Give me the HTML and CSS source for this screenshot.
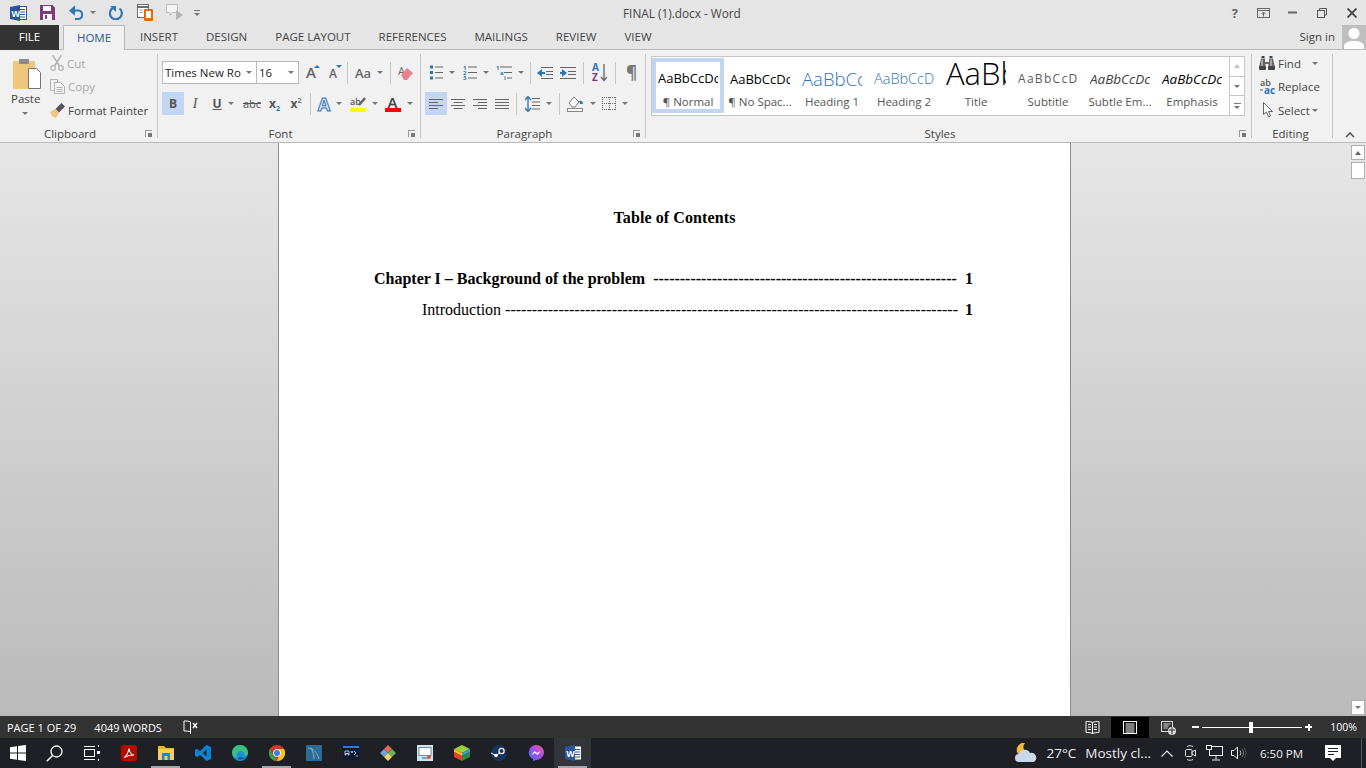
FILE: index.html
```html
<!DOCTYPE html>
<html lang="en">
<head>
  <meta charset="UTF-8" />
  <title>FINAL (1).docx - Word</title>
  <link rel="stylesheet" href="styles.css">
</head>
<body>
  <header class="titlebar">
    <div class="qat">
      <span class="qat-item q-word">
        <svg width="17" height="16" viewBox="0 0 17 16"><rect x="6" y="1.500" width="10.500" height="13" fill="#fff" stroke="#2b579a"/><path d="M10 4.500h5M10 7h5M10 9.500h5M10 12h5" stroke="#2b579a"/><path d="M0 2l10-2v16L0 14z" fill="#2b579a"/><text x="1.500" y="11.500" class="svg-w">W</text></svg>
      </span>
      <span class="qat-item q-save">
        <svg width="15" height="15" viewBox="0 0 15 15"><path d="M0 0h12.500L15 2.500V15H0z" fill="#80397b"/><rect x="3" y="1" width="8" height="5" fill="#fff"/><rect x="3" y="9" width="9" height="6" fill="#fff"/><rect x="5" y="10" width="2" height="4" fill="#80397b"/></svg>
      </span>
      <span class="qat-item q-undo">
        <svg width="16" height="15" viewBox="0 0 16 15"><path d="M3 5.500h6.500a4.300 4.300 0 0 1 0 8.500H6" fill="none" stroke="#2e75b6" stroke-width="2"/><path d="M6 0v10.500L0 5.500z" fill="#2e75b6" transform="translate(0 .2)"/></svg>
        <i class="caret"></i>
      </span>
      <span class="qat-item q-redo">
        <svg width="14" height="15" viewBox="0 0 14 15"><path d="M10.500 3.500A6 6 0 1 1 4 3" fill="none" stroke="#2e75b6" stroke-width="2.200"/><path d="M1 1h6v6z" fill="#2e75b6"/></svg>
      </span>
      <span class="qat-item q-touch">
        <svg width="17" height="17" viewBox="0 0 17 17"><rect x=".5" y=".5" width="11" height="13" fill="#fff" stroke="#6d6d6d"/><path d="M.5 3h11" stroke="#6d6d6d" stroke-width="2"/><path d="M2.500 6h3M2.500 8.500h3" stroke="#999"/><rect x="7" y="5" width="9" height="12" rx="1" fill="#e36c0a"/><rect x="9" y="7" width="5" height="7" fill="#fff"/></svg>
      </span>
      <span class="qat-item q-comment">
        <svg width="17" height="17" viewBox="0 0 17 17"><path d="M.5.500h11v8H6l-2 3v-3H.5z" fill="#f4f4f4" stroke="#bcbcbc"/><path d="M10 6l7 5-7 5z" fill="#b5b5b5"/></svg>
      </span>
      <span class="qat-item q-custom"><i class="qat-dash"></i><i class="caret small"></i></span>
    </div>
    <div class="doc-title">FINAL (1).docx - Word</div>
    <div class="win-btns">
      <span class="win-help">?</span>
      <svg class="win-opt" width="13" height="10" viewBox="0 0 13 10"><rect x=".5" y=".5" width="12" height="9" fill="none" stroke="#666"/><path d="M.5 2.500h12" stroke="#666"/><path d="M6.500 8.500V4M4.500 6l2-2 2 2" fill="none" stroke="#666"/></svg>
      <svg class="win-min" width="10" height="3" viewBox="0 0 10 3"><rect width="9" height="2" y=".5" fill="#666"/></svg>
      <svg class="win-max" width="10" height="10" viewBox="0 0 10 10"><path d="M2.500 2.500V.5h7v6.500H7.500" fill="none" stroke="#555"/><rect x=".5" y="2.500" width="7" height="7" fill="none" stroke="#555"/></svg>
      <svg class="win-close" width="10" height="10" viewBox="0 0 10 10"><path d="M.5.500l9 9M9.500.500l-9 9" stroke="#444" stroke-width="1.800"/></svg>
    </div>
  </header>

  <nav class="tabs">
    <span class="tab file">FILE</span>
    <span class="tab home">HOME</span>
    <span class="tab">INSERT</span>
    <span class="tab">DESIGN</span>
    <span class="tab">PAGE LAYOUT</span>
    <span class="tab">REFERENCES</span>
    <span class="tab">MAILINGS</span>
    <span class="tab">REVIEW</span>
    <span class="tab">VIEW</span>
    <span class="sign-in">Sign in</span>
    <svg class="avatar" width="24" height="24" viewBox="0 0 24 24"><rect width="24" height="24" fill="#bfbfbf"/><circle cx="12" cy="8.500" r="5.500" fill="#fff"/><path d="M2 24v-3c0-3 4-5 10-5s10 2 10 5v3z" fill="#fff"/></svg>
  </nav>

  <section class="ribbon">
    <div class="group clipboard">
      <div class="group-body clip-body">
        <div class="paste">
          <svg width="28" height="31" viewBox="0 0 28 31"><rect y="3" width="22" height="28" rx="1" fill="#ecc77d"/><rect x="6" y="1" width="10" height="5" rx="1" fill="#8a8a8a"/><path d="M15.500 10.500h8l4 4v16h-12z" fill="#fff" stroke="#777"/></svg>
          <span class="paste-label">Paste</span>
          <i class="caret"></i>
        </div>
        <div class="clip-actions">
          <div class="clip-row off">
            <svg width="14" height="16" viewBox="0 0 14 16"><path d="M2.500 0l7 11M11.500 0l-7 11" stroke="#b3b3b3" stroke-width="1.500"/><circle cx="3" cy="13" r="2.300" fill="none" stroke="#b3b3b3" stroke-width="1.300"/><circle cx="11" cy="13" r="2.300" fill="none" stroke="#b3b3b3" stroke-width="1.300"/></svg>
            <span>Cut</span>
          </div>
          <div class="clip-row off">
            <svg width="15" height="15" viewBox="0 0 15 15"><path d="M.5.500h7v3M4 11.500H.5V.500" fill="none" stroke="#b3b3b3"/><path d="M4.500 3.500h6l4 4v7h-10z" fill="#f5f5f5" stroke="#b3b3b3"/><path d="M6.500 8.500h6M6.500 10.500h6M6.500 12.500h6" stroke="#b3b3b3"/></svg>
            <span>Copy</span>
          </div>
          <div class="clip-row">
            <svg width="15" height="15" viewBox="0 0 15 15"><path d="M0 9l5-3 4 4-3 5c-2 0-5-3-6-6z" fill="#ecc77d"/><path d="M5.500 6l6-6 3.500 3.500-6 6z" fill="#555"/></svg>
            <span>Format Painter</span>
          </div>
        </div>
      </div>
      <div class="group-label">Clipboard<i class="launcher"></i></div>
    </div>

    <div class="group font">
      <div class="group-body stack">
        <div class="row">
          <span class="font-box">Times New Ro<i class="caret"></i></span>
          <span class="size-box">16<i class="caret"></i></span>
          <span class="t w22"><span class="big-a">A</span><i class="up-mark"></i></span>
          <span class="t w22"><span class="small-a">A</span><i class="down-mark"></i></span>
          <i class="sep"></i>
          <span class="t w36"><span class="aa">Aa</span><i class="caret"></i></span>
          <i class="sep"></i>
          <span class="t w23">
            <svg width="16" height="16" viewBox="0 0 16 16"><text x="0" y="10" class="svg-eraser">A</text><path d="M3 10l6-7 6 5-6 7H6z" fill="#e8828f"/></svg>
          </span>
        </div>
        <div class="row">
          <span class="t w22 on fmt bold">B</span>
          <span class="t w22 fmt ital">I</span>
          <span class="t w34 fmt under"><span>U</span><i class="caret"></i></span>
          <span class="t w24 fmt strike">abc</span>
          <span class="t w21 fmt bold"><span>x<sub>2</sub></span></span>
          <span class="t w22 fmt bold"><span>x<sup>2</sup></span></span>
          <i class="sep"></i>
          <span class="t w32"><span class="fx-a">A</span><i class="caret"></i></span>
          <span class="t w35">
            <svg width="16" height="16" viewBox="0 0 16 16"><text x="0" y="9" class="svg-ab">ab</text><path d="M9 9l6-7" stroke="#666" stroke-width="2.500"/><rect y="12" width="16" height="4" fill="#ffff00"/></svg>
            <i class="caret"></i>
          </span>
          <span class="t w35">
            <svg width="16" height="16" viewBox="0 0 16 16"><text x="2.500" y="11.500" class="svg-color">A</text><rect y="12" width="16" height="4" fill="#ff0000"/></svg>
            <i class="caret"></i>
          </span>
        </div>
      </div>
      <div class="group-label">Font<i class="launcher"></i></div>
    </div>

    <div class="group paragraph">
      <div class="group-body stack">
        <div class="row">
          <span class="t w34">
            <svg width="14" height="15" viewBox="0 0 14 15"><path d="M1 .500h3v3H1zM1 6h3v3H1zM1 11.500h3v3H1z" fill="#2e75b6"/><path d="M6 2h8M6 7.500h8M6 13h8" stroke="#666"/></svg>
            <i class="caret"></i>
          </span>
          <span class="t w33">
            <svg width="14" height="15" viewBox="0 0 14 15"><text x="0" y="5" class="svg-num">1</text><text x="0" y="10" class="svg-num">2</text><text x="0" y="15" class="svg-num">3</text><path d="M5 2h9M5 7.500h9M5 13h9" stroke="#666"/></svg>
            <i class="caret"></i>
          </span>
          <span class="t w35">
            <svg width="16" height="15" viewBox="0 0 16 15"><text x="0" y="5" class="svg-num">1</text><text x="4" y="10" class="svg-num">a</text><text x="8" y="15" class="svg-num">i</text><path d="M4 2h12M8 7.500h8M11 13h5" stroke="#666"/></svg>
            <i class="caret"></i>
          </span>
          <i class="sep"></i>
          <span class="t w22">
            <svg width="16" height="12" viewBox="0 0 16 12"><path d="M0 6l5-4v8z" fill="#2e75b6"/><path d="M4 6h4" stroke="#2e75b6" stroke-width="2"/><path d="M4 .500h12M9 4.500h7M9 7.500h7M4 11.500h12" stroke="#666"/></svg>
          </span>
          <span class="t w24">
            <svg width="16" height="12" viewBox="0 0 16 12"><path d="M7 6L2 2v8z" fill="#2e75b6"/><path d="M0 6h4" stroke="#2e75b6" stroke-width="2"/><path d="M0 .500h16M8 4.500h8M8 7.500h8M0 11.500h16" stroke="#666"/></svg>
          </span>
          <i class="sep"></i>
          <span class="t w25">
            <svg width="15" height="19" viewBox="0 0 15 19"><text x="0" y="8" class="svg-az a">A</text><text x="0" y="18" class="svg-az z">Z</text><path d="M12 1v16M9 14l3 3.500 3-3.500" fill="none" stroke="#666" stroke-width="1.300"/></svg>
          </span>
          <i class="sep"></i>
          <span class="t w25 pilcrow">¶</span>
        </div>
        <div class="row">
          <span class="t w22 on"><svg width="14" height="10" viewBox="0 0 14 10"><path d="M0 .500h14M0 3.500h9M0 6.500h14M0 9.500h9" stroke="#666"/></svg></span>
          <span class="t w22"><svg width="14" height="10" viewBox="0 0 14 10"><path d="M0 .500h14M2.500 3.500h9M0 6.500h14M2.500 9.500h9" stroke="#666"/></svg></span>
          <span class="t w22"><svg width="14" height="10" viewBox="0 0 14 10"><path d="M0 .500h14M5 3.500h9M0 6.500h14M5 9.500h9" stroke="#666"/></svg></span>
          <span class="t w22"><svg width="14" height="10" viewBox="0 0 14 10"><path d="M0 .500h14M0 3.500h14M0 6.500h14M0 9.500h14" stroke="#666"/></svg></span>
          <i class="sep"></i>
          <span class="t w36">
            <svg width="15" height="16" viewBox="0 0 15 16"><path d="M3 1v14M0 4l3-3.500L6 4M0 12l3 3.500L6 12" fill="none" stroke="#2e75b6" stroke-width="1.300"/><path d="M7 2.500h8M7 6h8M7 9.500h8M7 13h8" stroke="#666"/></svg>
            <i class="caret"></i>
          </span>
          <i class="sep"></i>
          <span class="t w36">
            <svg width="17" height="16" viewBox="0 0 17 16"><path d="M2 7l5-6 5 5-4 5H5z" fill="#fff" stroke="#777"/><path d="M12 5c2-1 4 0 4 3h-3z" fill="#2e75b6"/><rect x=".5" y="12.500" width="15" height="3" fill="#fff" stroke="#888"/></svg>
            <i class="caret"></i>
          </span>
          <span class="t w32">
            <svg class="dotted" width="14" height="13" viewBox="0 0 14 13"><path d="M0 .500h14M0 12.500h14M0 6.500h14M.5 0v13M13.500 0v13M7.500 0v13" fill="none" stroke="#666" stroke-dasharray="1 1"/></svg>
            <i class="caret"></i>
          </span>
        </div>
      </div>
      <div class="group-label">Paragraph<i class="launcher"></i></div>
    </div>

    <div class="group styles">
      <div class="group-body gallery-wrap">
        <div class="gallery">
          <div class="style-item selected"><span class="preview p-normal">AaBbCcDc</span><span class="style-name">¶ Normal</span></div>
          <div class="style-item"><span class="preview p-normal">AaBbCcDc</span><span class="style-name">¶ No Spac...</span></div>
          <div class="style-item"><span class="preview p-h1">AaBbCc</span><span class="style-name">Heading 1</span></div>
          <div class="style-item"><span class="preview p-h2">AaBbCcD</span><span class="style-name">Heading 2</span></div>
          <div class="style-item"><span class="preview p-title">AaBbC</span><span class="style-name">Title</span></div>
          <div class="style-item"><span class="preview p-sub">AaBbCcD</span><span class="style-name">Subtitle</span></div>
          <div class="style-item"><span class="preview p-em">AaBbCcDc</span><span class="style-name">Subtle Em...</span></div>
          <div class="style-item"><span class="preview p-em dark">AaBbCcDc</span><span class="style-name">Emphasis</span></div>
          <div class="gallery-scroll">
            <span class="gal-btn"><i class="caret up faint"></i></span>
            <span class="gal-btn"><i class="caret"></i></span>
            <span class="gal-btn more"><i class="more-bar"></i><i class="caret"></i></span>
          </div>
        </div>
      </div>
      <div class="group-label">Styles<i class="launcher"></i></div>
    </div>

    <div class="group editing">
      <div class="group-body edit-body">
        <div class="edit-row">
          <svg width="16" height="14" viewBox="0 0 16 14"><path d="M2.500 0h3v2h-3zM10.500 0h3v2h-3z" fill="#444"/><path d="M2 2.500h4V6h4V2.500h4l2 9H9.500V8h-3v3.500H0z" fill="#666"/><path d="M3 3.500v7M12 3.500v7" stroke="#ddd"/><rect y="10" width="7" height="4" rx="1" fill="#444"/><rect x="9" y="10" width="7" height="4" rx="1" fill="#444"/></svg>
          <span>Find</span><i class="caret find-caret"></i>
        </div>
        <div class="edit-row">
          <svg width="16" height="16" viewBox="0 0 16 16"><text x="1" y="7" class="svg-ab">ab</text><text x="5" y="15" class="svg-ac">ac</text><path d="M1 11h3" stroke="#2e75b6"/></svg>
          <span>Replace</span>
        </div>
        <div class="edit-row">
          <svg width="16" height="16" viewBox="0 0 16 16"><path d="M4.500.500v12l3-2.500 2 5 2-1-2-4.500h4z" fill="#fff" stroke="#666"/></svg>
          <span>Select</span><i class="caret select-caret"></i>
        </div>
      </div>
      <div class="group-label">Editing</div>
    </div>

    <div class="collapse">
      <svg width="10" height="6" viewBox="0 0 10 6"><path d="M1 5l4-4 4 4" fill="none" stroke="#555" stroke-width="1.600"/></svg>
    </div>
  </section>

  <main class="workspace">
    <div class="gutter"></div>
    <article class="page">
      <h1 class="toc-title">Table of Contents</h1>
      <div class="toc-line chapter"><span>Chapter I – Background of the problem&nbsp; ---------------------------------------------------------</span><span class="toc-num">1</span></div>
      <div class="toc-line intro"><span class="plain">Introduction -------------------------------------------------------------------------------------</span><span class="toc-num">1</span></div>
    </article>
    <div class="gutter right"></div>
    <div class="scrollbar">
      <span class="sb-btn"><i class="caret up"></i></span>
      <span class="sb-thumb"></span>
      <span class="sb-fill"></span>
      <span class="sb-btn"><i class="caret"></i></span>
    </div>
  </main>

  <footer class="statusbar">
    <span class="st-page">PAGE 1 OF 29</span>
    <span class="st-words">4049 WORDS</span>
    <svg class="st-proof" width="15" height="14" viewBox="0 0 15 14"><path d="M7.500 2C6 1 3 1 1 1v10c2 0 5 0 6.500 1M7.500 2V14" fill="none" stroke="#fff"/><path d="M10 3l4 5M14 3l-4 5" stroke="#fff" stroke-width="1.300"/></svg>
    <span class="st-spacer"></span>
    <span class="view-btn">
      <svg width="15" height="14" viewBox="0 0 15 14"><path d="M7.500 1.500C5.500.500 3 .500 1 .500v11c2 0 4.500 0 6.500 1 2-1 4.500-1 6.500-1V.500c-2 0-4.500 0-6.500 1zM7.500 1.500v11M3 3.500h3M3 6h3M3 8.500h3M9 3.500h3M9 6h3M9 8.500h3" fill="none" stroke="#fff"/></svg>
    </span>
    <span class="view-btn active">
      <svg width="14" height="13" viewBox="0 0 14 13"><rect x=".5" y=".5" width="13" height="12" fill="none" stroke="#fff"/><path d="M2.500 3h9M2.500 5h9M2.500 7h9M2.500 9h9M2.500 11h9" stroke="#fff"/></svg>
    </span>
    <span class="view-btn">
      <svg width="15" height="14" viewBox="0 0 15 14"><rect x=".5" y=".5" width="11" height="10" fill="none" stroke="#ddd"/><path d="M2.500 3h7M2.500 5h5M2.500 7h4" stroke="#ddd"/><circle cx="11" cy="10" r="4" fill="#ddd"/><path d="M8 9h6M11 6.500v7" stroke="#333"/></svg>
    </span>
    <div class="zoom">
      <span class="zoom-minus"></span>
      <div class="zoom-track"><span class="zoom-knob"></span></div>
      <span class="zoom-plus"></span>
    </div>
    <span class="zoom-pct">100%</span>
  </footer>

  <footer class="taskbar">
    <div class="task-icons">
      <span class="task-cell">
        <svg width="16" height="16" viewBox="0 0 16 16"><path d="M0 2.300L7 1.300V7.500H0zM8 1.100L16 0V7.500H8zM0 8.500H7V14.700L0 13.700zM8 8.500H16V16L8 14.900z" fill="#fff"/></svg>
      </span>
      <span class="task-cell">
        <svg width="17" height="17" viewBox="0 0 17 17"><circle cx="10.500" cy="6.500" r="5.500" fill="none" stroke="#fff" stroke-width="1.300"/><path d="M6.500 10.500L.8 16.200" stroke="#fff" stroke-width="1.500"/></svg>
      </span>
      <span class="task-cell">
        <svg width="17" height="16" viewBox="0 0 17 16"><rect x="1.500" y="4.500" width="10" height="7" fill="none" stroke="#fff"/><path d="M1 1.500h11M1 14.500h11M15.500 0v2M15.500 14v2" stroke="#fff"/><rect x="14" y="6" width="3" height="3" fill="#fff"/></svg>
      </span>
      <span class="task-cell">
        <svg width="16" height="16" viewBox="0 0 16 16"><rect width="16" height="16" rx="2" fill="#b30b00"/><path d="M3 12.500c2-1 4-4 5-9 .5 4 2 6 5 6.500-3-.2-6 .5-10 2.500z" fill="none" stroke="#fff" stroke-width="1.100"/></svg>
      </span>
      <span class="task-cell open">
        <svg width="16" height="14" viewBox="0 0 16 14"><path d="M0 0h6l2 2h8v3H0z" fill="#e6b23a"/><rect y="3" width="16" height="11" fill="#f7cf5f"/><rect x="4" y="7" width="8" height="7" fill="#1e88d8"/><rect x="6.500" y="10" width="3" height="4" fill="#f7cf5f"/></svg>
      </span>
      <span class="task-cell">
        <svg width="16" height="16" viewBox="0 0 16 16"><path d="M11.500 0L16 2v12l-4.500 2L5 9.800 2 12.300 0 11V5l2-1.300 3 2.500zM11.500 4.500L7.800 8l3.700 3.500z" fill="#0a84d8" fill-rule="evenodd"/></svg>
      </span>
      <span class="task-cell">
        <svg width="16" height="16" viewBox="0 0 16 16"><circle cx="8" cy="8" r="8" fill="#1c8fd6"/><path d="M0 8a8 8 0 0 1 16 0c0 2-2 3-4 2.500 1.500-2-1-5-4-4.500S4 10 5 13C2 12 0 10 0 8z" fill="#3ac27a"/><path d="M5.500 14c2 1 6 1 8.500-2-2 1-5 1-6-1z" fill="#155fa8"/></svg>
      </span>
      <span class="task-cell open">
        <svg width="16" height="16" viewBox="0 0 16 16"><circle cx="8" cy="8" r="8" fill="#d8382c"/><path d="M8 16A8 8 0 0 1 1 4l4 7z" fill="#2fa24a"/><path d="M8 16a8 8 0 0 0 7-12H8l3 4z" fill="#f7c51d"/><circle cx="8" cy="8" r="3.800" fill="#fff"/><circle cx="8" cy="8" r="3" fill="#3a7fe8"/></svg>
      </span>
      <span class="task-cell">
        <svg width="16" height="16" viewBox="0 0 16 16"><rect width="16" height="16" rx="1" fill="#2d6a94"/><path d="M2 3c5 0 9 4 11 11M5 3c2 4 3 7 3 11" fill="none" stroke="#9dc0d6" stroke-width=".8"/></svg>
      </span>
      <span class="task-cell">
        <svg width="16" height="14" viewBox="0 0 16 14"><rect width="16" height="14" fill="#0c1a33"/><rect width="16" height="2" fill="#3477d8"/><path d="M2 5v4h1V7l1 1 1-1v2h1V5zM8 5l1 2 1-2M11 5l2 2-2 2M13 10h2" stroke="#fff" stroke-width=".7" fill="none"/></svg>
      </span>
      <span class="task-cell">
        <svg width="16" height="16" viewBox="0 0 16 16"><path d="M8 0l4 4-4 4-4-4z" fill="#e46a58"/><path d="M4 4l4 4-4 4-4-4z" fill="#6ca3e0"/><path d="M12 4l4 4-4 4-4-4z" fill="#69b25c"/><path d="M8 8l4 4-4 4-4-4z" fill="#f2d569"/></svg>
      </span>
      <span class="task-cell">
        <svg width="16" height="16" viewBox="0 0 16 16"><rect width="16" height="16" fill="#cfe2ef"/><rect x="2" y="2.500" width="12" height="8" fill="#fff" stroke="#6b8ea8"/><path d="M5 13h6" stroke="#6b8ea8" stroke-width="1.500"/><circle cx="12" cy="12" r="2" fill="#d9534f"/></svg>
      </span>
      <span class="task-cell">
        <svg width="16" height="16" viewBox="0 0 16 16"><path d="M8 0l8 4-8 4-8-4z" fill="#9bd03a"/><path d="M0 4l8 4v3L0 7z" fill="#f2c21c"/><path d="M16 4L8 8v3l8-4z" fill="#2f9fdb"/><path d="M0 7l8 4v5l-8-4z" fill="#e8412f"/><path d="M16 7l-8 4v5l8-4z" fill="#2d8c3c"/></svg>
      </span>
      <span class="task-cell">
        <svg width="16" height="16" viewBox="0 0 16 16"><circle cx="8" cy="8" r="8" fill="#15355c"/><circle cx="10.500" cy="6" r="2.600" fill="none" stroke="#fff" stroke-width="1.200"/><circle cx="5" cy="10.500" r="1.800" fill="#fff"/><path d="M0 8l5 2.500M6 10l3-2.500" stroke="#fff"/></svg>
      </span>
      <span class="task-cell">
        <svg width="16" height="16" viewBox="0 0 16 16"><defs><linearGradient id="msgr" x1="0" y1="1" x2="1" y2="0"><stop offset="0" stop-color="#3f7bff"/><stop offset=".5" stop-color="#a04bf0"/><stop offset="1" stop-color="#ff5f8a"/></linearGradient></defs><path d="M8 0a8 7.500 0 0 1 0 15l-3 1v-2A8 7.500 0 0 1 8 0z" fill="url(#msgr)"/><path d="M3.500 10l3-4 2.500 2 3.500-2-3 4-2.500-2z" fill="#fff"/></svg>
      </span>
      <span class="task-cell open active">
        <svg width="16" height="16" viewBox="0 0 16 16"><rect x="5" y="1.500" width="11" height="13" fill="#fff"/><path d="M10 4.500h5M10 7h5M10 9.500h5M10 12h5" stroke="#2b579a"/><path d="M0 2l10-2v16L0 14z" fill="#2b579a"/><text x="1.300" y="11.500" class="svg-w">W</text></svg>
      </span>
    </div>
    <span class="st-spacer"></span>
    <svg class="tray-weather" width="23" height="20" viewBox="0 0 23 20"><path d="M10 0a7 7 0 1 0 5 10A6 6 0 0 1 10 0z" fill="#f6b73c"/><path d="M4 19a4 4 0 0 1 0-8 6 6 0 0 1 11-1 5 5 0 0 1 4 9z" fill="#c8d8e8"/></svg>
    <span class="tray-text temp">27°C</span>
    <span class="tray-text cond">Mostly cl...</span>
    <svg class="tray-up" width="12" height="7" viewBox="0 0 12 7"><path d="M.5 6.500L6 1l5.500 5.500" fill="none" stroke="#eee" stroke-width="1.200"/></svg>
    <svg class="tray-meet" width="11" height="16" viewBox="0 0 11 16"><rect x=".5" y="4.500" width="6.500" height="7" rx="1" fill="none" stroke="#ddd"/><path d="M7 7l3.500-2v6L7 9zM2 1.500c2-1 4-1 6 0M2 14.500c2 1 4 1 6 0" fill="none" stroke="#ddd"/></svg>
    <svg class="tray-net" width="17" height="16" viewBox="0 0 17 16"><rect x="3.500" y="1.500" width="13" height="9" fill="none" stroke="#eee"/><rect x=".5" y=".5" width="5" height="4" fill="#1f2025" stroke="#eee"/><path d="M10 10.500v4M6 15h8" stroke="#eee"/></svg>
    <svg class="tray-vol" width="16" height="14" viewBox="0 0 16 14"><path d="M.5 4.500h2.500L6.500 1v12L3 9.500H.5z" fill="none" stroke="#eee"/><path d="M9 4.500a4 4 0 0 1 0 5" fill="none" stroke="#bbb"/><path d="M11 3a6 6 0 0 1 0 8" fill="none" stroke="#777"/><path d="M13 1.500a9 9 0 0 1 0 11" fill="none" stroke="#555"/></svg>
    <span class="tray-text clock">6:50 PM</span>
    <svg class="tray-notif" width="16" height="16" viewBox="0 0 16 16"><path d="M0 0h16v13h-5l-3 3-3-3H0z" fill="#fff"/><path d="M3 3.500h10M3 6.500h10M3 9.500h6" stroke="#1f2025"/></svg>
    <span class="tray-edge"></span>
  </footer>
</body>
</html>
```

FILE: styles.css
```css
* {
  box-sizing: border-box;
}

html, body {
  height: 100%;
}

body {
  margin: 0;
  width: 1366px;
  height: 768px;
  overflow: hidden;
  display: flex;
  flex-direction: column;
  font-family: "Open Sans", "Noto Sans", sans-serif;
  font-size: 11.5px;
  color: #444;
  background: #e5e5e5;
}

i {
  display: block;
  font-style: normal;
}

svg {
  display: block;
  flex: none;
}

.dotted {
  shape-rendering: crispEdges;
}

.caret {
  width: 0;
  height: 0;
  border-left: 3px solid transparent;
  border-right: 3px solid transparent;
  border-top: 3px solid #777;
  flex: none;
}

.caret.up {
  border-top: 0;
  border-bottom: 4px solid #666;
}

.caret.faint {
  border-bottom-color: #c4c4c4;
}

/* title bar */
.titlebar {
  height: 25px;
  display: flex;
  align-items: center;
  position: relative;
  flex: none;
}

.qat {
  display: flex;
  align-items: center;
}

.qat-item {
  display: flex;
  align-items: center;
  flex: none;
}

.q-word { margin-left: 10px; }
.q-save { margin-left: 13px; }
.q-undo { margin-left: 14px; gap: 5px; }
.q-redo { margin-left: 13px; }
.q-touch { margin-left: 14px; }
.q-comment { margin-left: 12px; }
.q-custom { margin-left: 11px; flex-direction: column; gap: 2px; }

.qat-dash {
  width: 6px;
  height: 1px;
  background: #777;
}

.doc-title {
  position: absolute;
  left: 623px;
  top: 5px;
  font-size: 11.8px;
  color: #444;
  white-space: nowrap;
}

.win-btns {
  margin-left: auto;
  display: flex;
  align-items: center;
  padding-right: 9px;
}

.win-help {
  font-size: 13px;
  font-weight: 700;
  color: #666;
  margin-right: 19px;
}

.win-min { margin-left: 18px; }
.win-max { margin-left: 19px; }
.win-close { margin-left: 20px; }

/* tabs */
.tabs {
  height: 25px;
  display: flex;
  align-items: stretch;
  flex: none;
  border-bottom: 1px solid #b9b9b9;
}

.tab {
  padding: 0 14px;
  line-height: 24px;
  color: #444;
  font-size: 11.5px;
  white-space: nowrap;
}

.tab.file {
  width: 59px;
  padding: 0;
  height: 25px;
  text-align: center;
  background: #333;
  color: #fff;
  margin-right: 4px;
}

.tab.home {
  width: 62px;
  padding: 0;
  height: 25px;
  text-align: center;
  color: #2b579a;
  background: #f1f1f1;
  border: 1px solid #b9b9b9;
  border-bottom: 0;
  margin-right: 1px;
}

.sign-in {
  margin-left: auto;
  line-height: 24px;
  margin-right: 7px;
}

/* ribbon */
.ribbon {
  height: 93px;
  flex: none;
  display: flex;
  background: #f1f1f1;
  border-bottom: 1px solid #b9b9b9;
  padding-top: 4px;
}

.group {
  height: 84px;
  border-right: 1px solid #c6c6c6;
  flex: none;
  display: flex;
  flex-direction: column;
}

.group-body {
  height: 72px;
  flex: none;
}

.group-label {
  position: relative;
  height: 16px;
  padding-right: 17px;
  text-align: center;
  line-height: 16px;
  font-size: 11.5px;
  color: #444;
}

.editing .group-label {
  padding-right: 3px;
}

.launcher {
  position: absolute;
  right: 5px;
  bottom: 5px;
  width: 7px;
  height: 7px;
  border-left: 1px solid #999;
  border-top: 1px solid #999;
}

.launcher::after {
  content: "";
  position: absolute;
  right: 0;
  bottom: 0;
  width: 4px;
  height: 4px;
  background: #777;
}

.clipboard { width: 158px; }
.font { width: 263px; }
.paragraph { width: 225px; }
.styles { width: 606px; }
.editing { width: 81px; }

.clip-body {
  display: flex;
}

.paste {
  width: 50px;
  padding: 4px 0 0 13px;
  display: flex;
  flex-direction: column;
  align-items: flex-start;
}

.paste-label {
  margin: 2px 0 0 -2px;
  color: #444;
  line-height: 16px;
}

.paste .caret {
  margin: 5px 0 0 9px;
}

.clip-actions,
.edit-body {
  display: flex;
  flex-direction: column;
  gap: 3.500px;
  margin-top: -1px;
}

.clip-row,
.edit-row {
  height: 20px;
  display: flex;
  align-items: center;
  white-space: nowrap;
}

.clip-row {
  gap: 3px;
}

.clip-row.off {
  color: #a9a9a9;
}

.stack {
  display: flex;
  flex-direction: column;
  padding-left: 4px;
}

.row {
  display: flex;
  align-items: center;
  height: 23px;
  margin-top: 7px;
}

.row + .row {
  margin-top: 8px;
}

.t {
  display: flex;
  align-items: center;
  justify-content: center;
  gap: 6px;
  height: 23px;
  flex: none;
  color: #555;
}

.t.on {
  background: #c2d5f2;
}

.w21 { width: 21px; }
.w22 { width: 22px; }
.w23 { width: 23px; }
.w24 { width: 24px; }
.w25 { width: 25px; }
.w32 { width: 32px; }
.w33 { width: 33px; }
.w34 { width: 34px; }
.w35 { width: 35px; }
.w36 { width: 36px; }

.sep {
  width: 1px;
  height: 22px;
  margin: 0 3px;
  background: #c6c6c6;
  flex: none;
}

.font-box,
.size-box {
  height: 23px;
  background: #fff;
  border: 1px solid #b9b9b9;
  display: flex;
  align-items: center;
  justify-content: space-between;
  padding: 0 4px 0 2px;
  color: #222;
  font-size: 11.5px;
  flex: none;
  white-space: nowrap;
}

.font-box { width: 95px; }
.size-box { width: 43px; margin-left: -1px; margin-right: 1px; }

.big-a,
.small-a {
  font-weight: 600;
  color: #666;
  line-height: 1;
}

.big-a { font-size: 15px; }
.small-a { font-size: 12px; margin-top: 3px; }

.t:has(.big-a),
.t:has(.small-a) {
  position: relative;
}

.up-mark,
.down-mark {
  position: absolute;
  right: 2px;
  top: 4px;
  border-left: 3px solid transparent;
  border-right: 3px solid transparent;
}

.up-mark { border-bottom: 3px solid #2e75b6; }
.down-mark { border-top: 3px solid #2e75b6; }

.aa {
  font-size: 13px;
  font-weight: 600;
  color: #666;
}

.fmt {
  font-size: 12px;
  color: #555;
}

.bold {
  font-weight: 700;
}

.ital {
  font-family: "Liberation Serif", serif;
  font-style: italic;
  font-size: 14px;
}

.under > span {
  text-decoration: underline;
  font-weight: 700;
}

.strike {
  text-decoration: line-through;
  font-size: 11px;
}

.fmt sub,
.fmt sup {
  font-size: 7px;
  line-height: 0;
  color: #2e75b6;
}

.fmt sup {
  color: #777;
}

.fx-a {
  font-size: 18px;
  font-weight: 700;
  line-height: 1;
  color: #dfeaf6;
  -webkit-text-stroke: 1px #3a75b5;
}

.pilcrow {
  font-size: 17px;
  font-weight: 700;
  color: #777;
}

.svg-w {
  font-family: "Liberation Sans", sans-serif;
  font-size: 9px;
  font-weight: 700;
  fill: #fff;
}

.svg-eraser {
  font-size: 11px;
  fill: #666;
}

.svg-ab {
  font-size: 9px;
  font-weight: 600;
  fill: #555;
}

.svg-ac {
  font-size: 10px;
  font-weight: 700;
  fill: #2e75b6;
}

.svg-color {
  font-size: 15px;
  font-weight: 600;
  fill: #444;
}

.svg-num {
  font-size: 6px;
  font-weight: 700;
  fill: #2e75b6;
}

.svg-az {
  font-size: 10px;
  font-weight: 700;
}

.svg-az.a { fill: #2e75b6; }
.svg-az.z { fill: #80397b; }

/* styles gallery */
.gallery-wrap {
  padding: 2px 0 0 5px;
}

.gallery {
  width: 594px;
  height: 60px;
  background: #fff;
  border: 1px solid #c6c6c6;
  display: flex;
}

.style-item {
  width: 72px;
  flex: none;
  height: 58px;
  padding-top: 1px;
  display: flex;
  flex-direction: column;
  align-items: center;
  overflow: hidden;
  border: 4px solid transparent;
  border-bottom-width: 6px;
  border-top-width: 1px;
}

.style-item.selected {
  border: 4px solid #c2d5f2;
  height: 55px;
  margin-top: 1px;
  padding-top: 0;
}

.preview {
  display: block;
  width: 60px;
  height: 32px;
  line-height: 40px;
  overflow: hidden;
  white-space: nowrap;
  text-align: left;
  flex: none;
  color: #000;
}

.selected .preview {
  height: 30px;
  line-height: 33px;
}

.p-normal { font-size: 13px; }
.p-h1 { font-size: 18.500px; font-weight: 300; color: #2e74b5; }
.p-h2 { font-size: 14.500px; font-weight: 300; color: #2e74b5; }
.p-title { font-size: 31px; font-weight: 300; line-height: 28px; }
.p-sub { font-size: 12px; letter-spacing: 1.300px; color: #5a5a5a; }
.p-em { font-size: 13.500px; font-style: italic; color: #404040; }
.p-em.dark { color: #000; }

.style-name {
  display: block;
  line-height: 16px;
  font-size: 11.5px;
  color: #555;
  white-space: nowrap;
  margin-top: 3px;
}

.selected .style-name {
  margin-top: 2px;
}

.gallery-scroll {
  width: 15px;
  margin-left: auto;
  flex: none;
  display: flex;
  flex-direction: column;
  border-left: 1px solid #c6c6c6;
}

.gal-btn {
  flex: 1;
  display: flex;
  flex-direction: column;
  align-items: center;
  justify-content: center;
  gap: 2px;
  border-bottom: 1px solid #c6c6c6;
}

.gal-btn:last-child {
  border-bottom: 0;
}

.more-bar {
  width: 7px;
  height: 1px;
  background: #777;
}

/* editing */
.edit-body {
  height: 73px;
  padding-left: 7px;
}

.edit-row {
  gap: 3px;
}

.find-caret { margin-left: 8px; }
.select-caret { margin-left: -1px; }

.collapse {
  flex: 1;
  display: flex;
  justify-content: center;
  padding-top: 78px;
}

/* document area */
.workspace {
  height: 573px;
  flex: none;
  display: flex;
  background: linear-gradient(#e6e6e6, #bababa);
}

.gutter {
  width: 278px;
  flex: none;
}

.gutter.right {
  width: 280px;
}

.page {
  width: 793px;
  flex: none;
  background: #fff;
  border-left: 1px solid #8c8c8c;
  border-right: 1px solid #8c8c8c;
  padding: 65px 97px 0 95px;
  font-family: "Liberation Serif", serif;
  font-size: 16px;
  color: #000;
}

.toc-title {
  margin: 0 0 41px;
  padding-left: 2px;
  font-size: 16px;
  line-height: 20px;
  letter-spacing: .1px;
  text-align: center;
  font-weight: 700;
}

.toc-line {
  display: flex;
  justify-content: space-between;
  line-height: 20px;
  margin-bottom: 11px;
  font-weight: 700;
  white-space: nowrap;
}

.toc-line .plain {
  font-weight: 400;
}

.toc-line.intro {
  padding-left: 48px;
}

.scrollbar {
  width: 16px;
  flex: none;
  margin-left: -1px;
  display: flex;
  flex-direction: column;
  align-items: center;
  padding: 2px 0 1px;
}

.sb-btn {
  width: 14px;
  height: 15px;
  background: #fff;
  border: 1px solid #b0b0b0;
  display: flex;
  align-items: center;
  justify-content: center;
  flex: none;
}

.sb-thumb {
  width: 14px;
  height: 17px;
  margin-top: 2px;
  background: #fff;
  border: 1px solid #b0b0b0;
  flex: none;
}

.sb-fill {
  flex: 1;
}

/* status bar */
.statusbar {
  height: 22px;
  flex: none;
  display: flex;
  align-items: center;
  background: #333;
  color: #fff;
  font-size: 11px;
}

.st-page {
  margin-left: 7px;
}

.st-words {
  margin-left: 18px;
}

.st-proof {
  margin-left: 21px;
}

.st-spacer {
  flex: 1;
}

.view-btn {
  width: 38px;
  height: 21px;
  margin-top: 1px;
  display: flex;
  align-items: center;
  justify-content: center;
}

.view-btn.active {
  background: #000;
}

.zoom {
  display: flex;
  align-items: center;
  margin-left: 5px;
  gap: 3px;
}

.zoom-minus,
.zoom-plus {
  width: 7px;
  height: 7px;
  background: linear-gradient(#fff, #fff) center / 7px 2px no-repeat;
}

.zoom-plus {
  background:
    linear-gradient(#fff, #fff) center / 8px 2px no-repeat,
    linear-gradient(#fff, #fff) center / 2px 8px no-repeat;
}

.zoom-track {
  width: 100px;
  height: 1px;
  background: #fff;
  position: relative;
}

.zoom-knob {
  position: absolute;
  left: 47px;
  top: -5px;
  width: 4px;
  height: 11px;
  background: #fff;
}

.zoom-pct {
  margin: 0 9px 0 18px;
  font-size: 10.500px;
}

/* windows taskbar */
.taskbar {
  height: 30px;
  flex: none;
  display: flex;
  align-items: center;
  background: #1f2025;
  color: #eee;
}

.task-icons {
  display: flex;
  height: 30px;
  margin-left: -1px;
}

.task-cell {
  width: 37px;
  height: 30px;
  display: flex;
  align-items: center;
  justify-content: center;
  position: relative;
}

.task-cell.open::after {
  content: "";
  position: absolute;
  left: 4px;
  right: 4px;
  bottom: 0;
  height: 2px;
  background: #a6a6a6;
}

.task-cell.active {
  background: #33353b;
}

.tray-text {
  font-size: 13.500px;
  white-space: nowrap;
}

.tray-weather { margin-right: 9px; }
.cond { margin-left: 9px; }
.tray-up { margin-left: 10px; }
.tray-meet { margin-left: 12px; }
.tray-net { margin-left: 10px; }
.tray-vol { margin-left: 8px; }
.clock { margin-left: 13px; font-size: 11.5px; }
.tray-notif { margin-left: 22px; }

.tray-edge {
  width: 1px;
  height: 30px;
  margin-left: 20px;
  background: #55565a;
  margin-right: 4px;
}
```
